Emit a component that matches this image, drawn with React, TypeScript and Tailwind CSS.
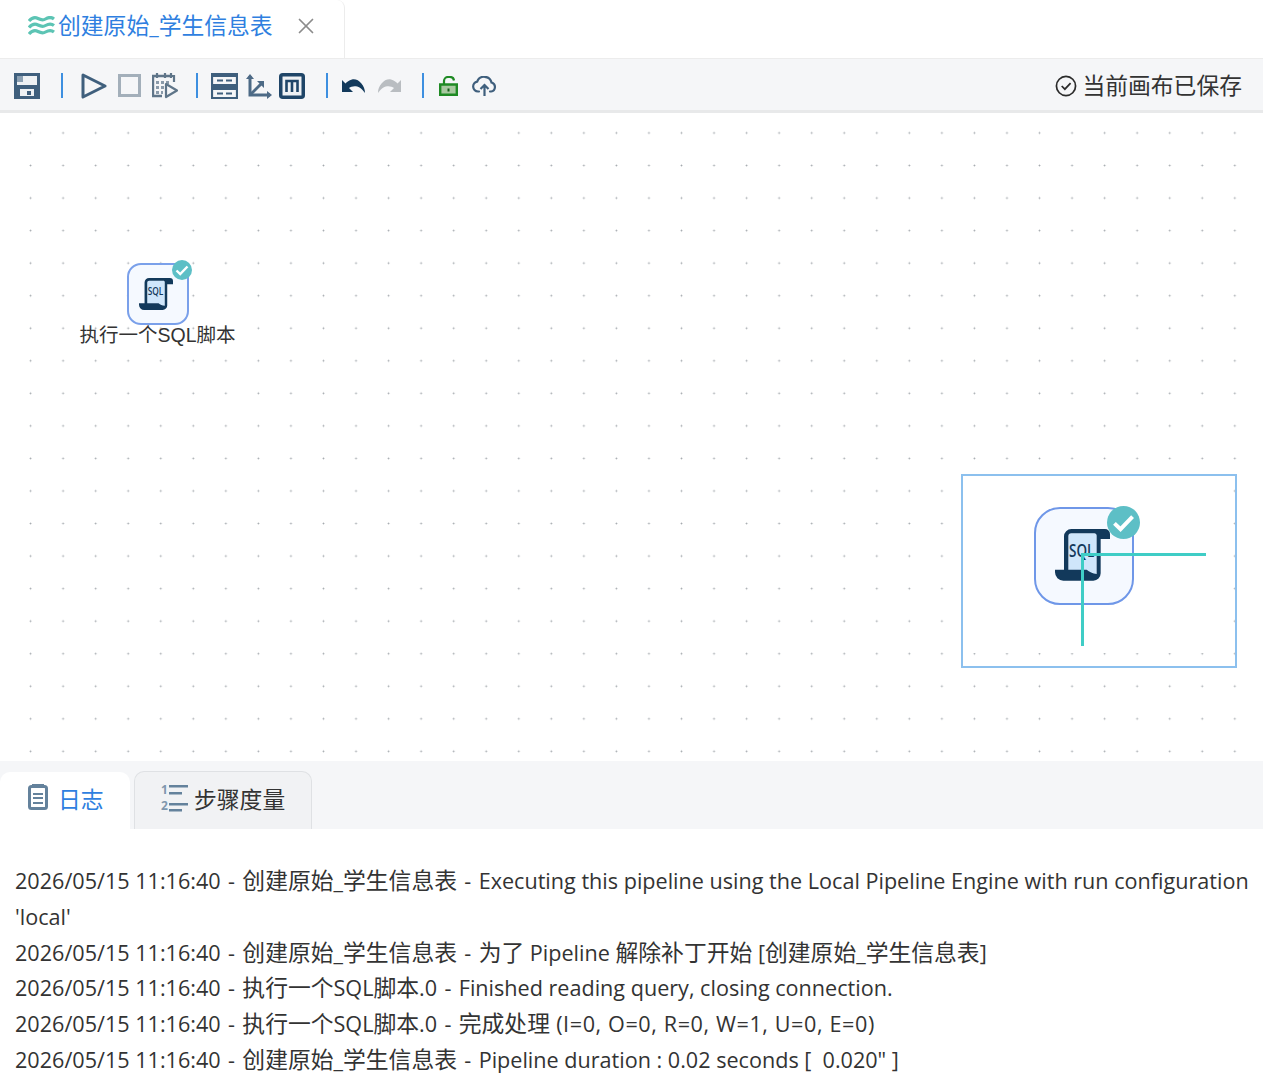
import { X } from "lucide-react";

const font = "font-['Open_Sans','Noto_Sans_CJK_SC',sans-serif]";

function Mixed({ text }: { text: string }) {
  const parts = text.split(/([\u4e00-\u9fff]+| - )/);
  return (
    <>
      {parts.map((p, i) => {
        if (p === " - ") {
          return (
            <span key={i} className="text-[21.6px] px-[1.75px]">
              {p}
            </span>
          );
        }
        if (p.includes("=")) {
          return (
            <span key={i} className="text-[21.6px] tracking-[0.6px]">
              {p}
            </span>
          );
        }
        return i % 2 === 1 ? (
          <span key={i}>{p}</span>
        ) : (
          <span key={i} className="text-[21.6px]">
            {p}
          </span>
        );
      })}
    </>
  );
}

function Sep() {
  return <span className="w-[2px] h-[25px] bg-[#3d8fe0]" />;
}

function ScrollIcon({ width }: { width: number }) {
  return (
    <svg width={width} height={(width * 155) / 165} viewBox="0 0 165 155">
      <path d="M40 125V22a9 9 0 0 1 9-9h69c4 0 7 3 7 7v118c-12-2-22-6-30-13z" fill="#cfe6fb" />
      <path
        d="M27 122V22A22 22 0 0 1 49 0h101a15 15 0 0 1 15 15v15h-28v103a22 22 0 0 1-22 22H25a25 25 0 0 1-25-25v-8h95c8 7 18 11 30 13V20c0-4-3-7-7-7H49a9 9 0 0 0-9 9v100z"
        fill="#12395b"
      />
      <text
        x="42"
        y="84"
        fontSize="56"
        fontWeight="600"
        fill="#12395b"
        fontFamily="'Open Sans',sans-serif"
        textLength="76"
        lengthAdjust="spacingAndGlyphs"
      >
        SQL
      </text>
    </svg>
  );
}

function CheckBadge({ size }: { size: number }) {
  return (
    <svg width={size} height={size} viewBox="0 0 20 20">
      <circle cx="10" cy="10" r="10" fill="#5dbfc6" />
      <path d="M4.500 10.500l3.700 3.500 7.300-7.500" fill="none" stroke="#fff" strokeWidth="2.400" />
    </svg>
  );
}

function Toolbar() {
  const dark = "#3f5f7d";
  return (
    <div className="h-[54px] flex items-center justify-between bg-[#f5f6f8] border-b-[3px] border-[#e8e9ea] pt-[2px] pl-[14px] pr-[21px]">
      <div className="flex items-center">
        <svg width="26" height="26" viewBox="0 0 26 26">
          <path d="M0 0h26v26H0z" fill={dark} />
          <path d="M3 3h20v9H3z" fill="#eef1f4" />
          <path d="M6 16h14v7H6z" fill="#eef1f4" />
          <path d="M3 3h6v6H3z" fill="#8ba0b3" />
          <path d="M13 18h4v4h-4z" fill={dark} />
        </svg>
        <span className="w-[21px]" />
        <Sep />
        <span className="w-[18px]" />
        <svg width="26" height="26" viewBox="0 0 26 26">
          <path d="M2 2l22 11L2 24z" fill="none" stroke={dark} strokeWidth="3" strokeLinejoin="round" />
        </svg>
        <span className="w-[11px]" />
        <span className="w-[23px] h-[23px] border-[3px] border-[#a3afba]" />
        <span className="w-[11px]" />
        <svg width="26" height="26" viewBox="0 0 26 26">
          <path d="M18 3H1v20h9" fill="none" stroke="#5f7589" strokeWidth="2.400" />
          <path d="M5 0v5M13 0v5M19 0v5M20 3h2v6" stroke="#5f7589" strokeWidth="2.200" fill="none" />
          <path d="M4 8h3v3H4zM9 8h3v3H9zM14 8h3v3h-3zM4 13h3v3H4zM9 13h3v3H9zM4 18h3v3H4zM9 18h2v3H9z" fill="#8a9aaa" />
          <path d="M14 11l11 6.500L14 24z" fill="#f5f6f8" stroke="#5f7589" strokeWidth="2.200" strokeLinejoin="round" />
        </svg>
        <span className="w-[18px]" />
        <Sep />
        <span className="w-[13px]" />
        <svg width="27" height="26" viewBox="0 0 27 26">
          <path d="M1 1h25v11H1zM1 14h25v11H1z" fill="none" stroke={dark} strokeWidth="2.200" />
          <path d="M1 1h25v3H1zM1 14h25v3H1z" fill={dark} />
          <path d="M6 6.500h6v2H6zM15 6.500h6v2h-6zM6 19.500h6v2H6zM15 19.500h6v2h-6z" fill={dark} />
        </svg>
        <span className="w-[8px]" />
        <svg width="26" height="26" viewBox="0 0 26 26">
          <path d="M4 3v19h20" fill="none" stroke="#4d6a86" strokeWidth="3" />
          <path d="M4 22L16 10" fill="none" stroke="#4d6a86" strokeWidth="3" />
          <path d="M0 6l4-5 4 5zM21 18l5 4-5 4zM11 8h7v7z" fill="#4d6a86" />
        </svg>
        <span className="w-[7px]" />
        <svg width="26" height="26" viewBox="0 0 26 26">
          <rect x="1.750" y="1.750" width="22.500" height="22.500" rx="2" fill="#eef1f4" stroke="#1f4568" strokeWidth="3.500" />
          <path d="M7.500 19V8h11v11M13 8v11" fill="none" stroke="#1f4568" strokeWidth="2.600" />
        </svg>
        <span className="w-[21px]" />
        <Sep />
        <span className="w-[14px]" />
        <svg width="24" height="14" viewBox="0 0 24 14">
          <path d="M0 1v12h11L7 9c4-3 11-3 16 5C23 6 16-1 10 .5 7 1 5 3 3.500 4.500z" fill="#12395b" />
        </svg>
        <span className="w-[11px]" />
        <svg width="24" height="14" viewBox="0 0 24 14">
          <path d="M24 1v12H13l4-4c-4-3-11-3-16 5C1 6 8-1 14 .5c3 .5 5 2.500 6.500 4z" fill="#b9bdc1" />
        </svg>
        <span className="w-[21px]" />
        <Sep />
        <span className="w-[15px]" />
        <svg width="19" height="20" viewBox="0 0 19 20">
          <path d="M1.200 8.500h16.600v10.300H1.200z" fill="#a8c9a0" stroke="#1f8a24" strokeWidth="2.400" />
          <path d="M5 8.500V5a4 4 0 0 1 4-4h2a4 4 0 0 1 4 3.500" fill="none" stroke="#1f8a24" strokeWidth="2.200" />
          <path d="M8.500 12.500h2v3h-2z" fill="#145c18" />
        </svg>
        <span className="w-[14px]" />
        <svg width="25" height="20" viewBox="0 0 25 20">
          <path d="M7 15.500H6a5 5 0 0 1-.8-9.900A7.500 7.500 0 0 1 19.500 6.500a4.600 4.600 0 0 1-.5 9h-1" fill="none" stroke="#3f5f7d" strokeWidth="2.200" strokeLinecap="round" />
          <path d="M12.500 20V9.500M8.500 13l4-4 4 4" fill="none" stroke="#3f5f7d" strokeWidth="2.200" />
        </svg>
      </div>
      <div className="flex items-center gap-[5px] text-[22.8px] text-[#333]">
        <svg width="22" height="22" viewBox="0 0 23 23">
          <circle cx="11.500" cy="11.500" r="10" fill="none" stroke="#2b2b2b" strokeWidth="1.800" />
          <path d="M7 11.500l3.300 3.300 6-6.300" fill="none" stroke="#2b2b2b" strokeWidth="1.800" />
        </svg>
        <span className="mt-[1px]">当前画布已保存</span>
      </div>
    </div>
  );
}

function Canvas() {
  return (
    <div className="relative h-[648px] bg-white bg-[radial-gradient(circle,#a3a8ad_0.8px,transparent_1.1px)] bg-[length:32.55px_32.55px] bg-[position:14.3px_3.7px]">
      <div className="absolute left-[79px] top-[150px] w-[157px] flex flex-col items-center">
        <div className="relative w-[62px] h-[62px] rounded-[14px] border-2 border-[#7aa0ea] bg-[#f5f9ff] flex items-center justify-center pr-[4px]">
          <ScrollIcon width={34} />
          <span className="absolute -top-[5px] -right-[5px] flex">
            <CheckBadge size={20} />
          </span>
        </div>
        <span className="text-[19.5px] leading-[20px] text-[#333] whitespace-nowrap">
          执行一个<span className="font-['Liberation_Sans']">SQL</span>脚本
        </span>
      </div>
      <div className="absolute left-[961px] top-[361px] w-[276px] h-[194px] border-2 border-[#8cc0ee]">
        <div className="absolute left-0 top-0 w-[270px] h-[177px] bg-white" />
        <div className="absolute left-[71px] top-[31px] w-[100px] h-[98px] rounded-[26px] border-2 border-[#6f97e8] bg-[#f5f9ff] flex items-center justify-center pr-[4px] pb-[2px]">
          <ScrollIcon width={55} />
          <span className="absolute -top-[3px] -right-[8px] flex">
            <CheckBadge size={33} />
          </span>
        </div>
        <span className="absolute left-[118px] top-[77px] w-[125px] h-[3px] bg-[#3fcdc6]" />
        <span className="absolute left-[118px] top-[77px] w-[3px] h-[93px] bg-[#3fcdc6]" />
      </div>
    </div>
  );
}

function Tabs() {
  return (
    <div className="h-[68px] bg-[#f5f6f8] flex items-end gap-[4px]">
      <div className="w-[130px] h-[57px] bg-white rounded-t-[10px] flex items-center pl-[28px] text-[#2f7fe0] text-[22.8px]">
        <svg width="20" height="26" viewBox="0 0 20 26" className="mb-[8px]">
          <rect x="1.500" y="2.500" width="17" height="22" rx="2" fill="none" stroke="#64829c" strokeWidth="3" />
          <path d="M4 0h12v3H4zM5 9h10v2H5zM5 13h10v2H5zM5 18h10v2H5z" fill="#64829c" />
        </svg>
        <span className="ml-[10px]">日志</span>
      </div>
      <div className="w-[178px] h-[58px] bg-[#f1f2f4] border border-b-0 border-[#dfe1e4] rounded-t-[10px] flex items-center pl-[26px] text-[#333] text-[22.8px]">
        <svg width="27" height="28" viewBox="0 0 27 28" className="mb-[6px] overflow-visible">
          <text x="0" y="10" fontSize="12" fontWeight="700" fill="#7f97ad" fontFamily="'Open Sans',sans-serif">1</text>
          <text x="0" y="26" fontSize="12" fontWeight="700" fill="#7f97ad" fontFamily="'Open Sans',sans-serif">2</text>
          <path d="M8 1h19v2.500H8zM8 8h13v2.500H8zM8 19h19v2.500H8zM8 25h13v2.500H8z" fill="#64829c" />
        </svg>
        <span className="ml-[6px]">步骤度量</span>
      </div>
    </div>
  );
}

const lines = [
  "2026/05/15 11:16:40 - 创建原始_学生信息表 - Executing this pipeline using the Local Pipeline Engine with run configuration 'local'",
  "2026/05/15 11:16:40 - 创建原始_学生信息表 - 为了 Pipeline 解除补丁开始 [创建原始_学生信息表]",
  "2026/05/15 11:16:40 - 执行一个SQL脚本.0 - Finished reading query, closing connection.",
  "2026/05/15 11:16:40 - 执行一个SQL脚本.0 - 完成处理 (I=0, O=0, R=0, W=1, U=0, E=0)",
  "2026/05/15 11:16:40 - 创建原始_学生信息表 - Pipeline duration : 0.02 seconds [  0.020\" ]",
];

export default function App() {
  return (
    <div className={`${font} w-[1263px] h-[1080px] overflow-hidden bg-white`}>
      <div className="h-[59px] bg-white border-b border-[#ececec] flex">
        <div className="w-[345px] h-[59px] border-r border-[#ececec] rounded-tr-[8px] flex items-center pl-[28px] pb-[7px]">
          <svg width="27" height="21" viewBox="0 0 27 21" className="mr-[3px]">
            <path d="M1 5c3.500-4 6-4 9-2.500s5 2 7.500.5 5.500-2.500 8.500 0M1 11.500c3.500-4 6-4 9-2.500s5 2 7.500.5 5.500-2.500 8.500 0M1 18c3.500-4 6-4 9-2.500s5 2 7.500.5 5.500-2.500 8.500 0" fill="none" stroke="#5cc4b4" strokeWidth="3.200" />
          </svg>
          <span className="text-[22.8px] text-[#2f7fe0] whitespace-nowrap">
            <Mixed text="创建原始_学生信息表" />
          </span>
          <X size={26} strokeWidth={1.600} className="ml-[20px] text-[#8c8c8c]" />
        </div>
      </div>
      <Toolbar />
      <Canvas />
      <Tabs />
      <div className="pt-[34px] pl-[15px] pr-[10px] text-[22.8px] leading-[35.8px] text-[#333]">
        {lines.map((l) => (
          <div key={l} className="whitespace-pre-wrap">
            <Mixed text={l} />
          </div>
        ))}
      </div>
    </div>
  );
}
